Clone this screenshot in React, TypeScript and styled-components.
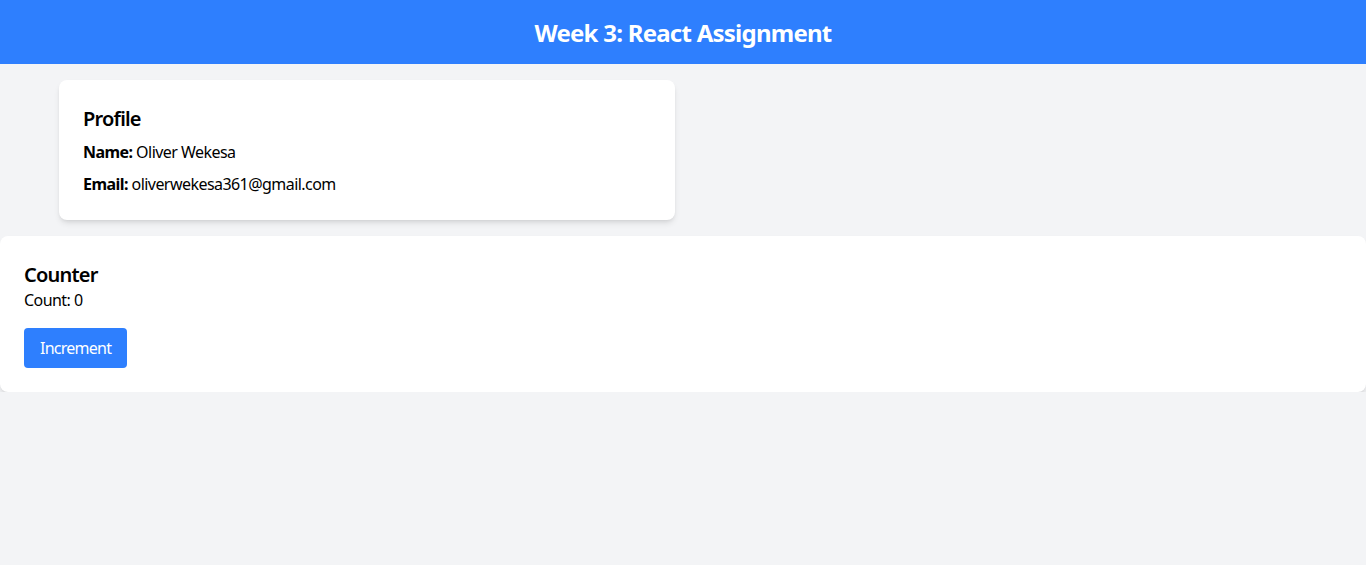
import React, { useState } from "react";
import styled, { createGlobalStyle } from "styled-components";

const GlobalStyle = createGlobalStyle`
  * { box-sizing: border-box; }
  html, body { margin: 0; padding: 0; }
  body {
    background: #f3f4f6;
    font-family: "Noto Sans", "Open Sans", sans-serif;
    color: #000;
    letter-spacing: -0.55px;
  }
`;

const Header = styled.header`
  height: 64px;
  background: #2e7ffe;
  display: flex;
  align-items: center;
  justify-content: center;
`;

const Title = styled.h1`
  margin: 0;
  padding-top: 2px;
  color: #fff;
  font-size: 24px;
  font-weight: 700;
  line-height: 32px;
  letter-spacing: -0.75px;
`;

const Main = styled.main`
  display: flex;
  flex-direction: column;
  gap: 16px;
  padding-top: 16px;
`;

const Card = styled.section<{ $wide?: boolean }>`
  background: #fff;
  border-radius: 8px;
  box-shadow: 0 4px 6px -1px rgba(0, 0, 0, 0.1), 0 2px 4px -2px rgba(0, 0, 0, 0.1);
  padding: 24px;
  width: ${(p) => (p.$wide ? "100%" : "616px")};
  margin-left: ${(p) => (p.$wide ? "0" : "59px")};
`;

const CardTitle = styled.h2`
  margin: 0;
  padding-top: 1px;
  height: 28px;
  font-size: 20px;
  line-height: 28px;
  font-weight: 600;
  letter-spacing: -0.8px;
`;

const Line = styled.p<{ $spaced?: boolean }>`
  margin: ${(p) => (p.$spaced ? "8px 0 0" : "0")};
  font-size: 16px;
  line-height: 24px;
  b { font-weight: 700; }
`;

const Button = styled.button`
  margin-top: 16px;
  background: #2e7ffe;
  color: #fff;
  border: none;
  border-radius: 4px;
  padding: 8px 16px;
  font-family: inherit;
  font-size: 16px;
  line-height: 24px;
  letter-spacing: -0.75px;
  cursor: pointer;
`;

export default function App() {
  const [count, setCount] = useState(0);
  return (
    <>
      <GlobalStyle />
      <Header>
        <Title>Week 3: React Assignment</Title>
      </Header>
      <Main>
        <Card>
          <CardTitle>Profile</CardTitle>
          <Line $spaced>
            <b>Name:</b> Oliver Wekesa
          </Line>
          <Line $spaced>
            <b>Email:</b> oliverwekesa361@gmail.com
          </Line>
        </Card>
        <Card $wide>
          <CardTitle>Counter</CardTitle>
          <Line>Count: {count}</Line>
          <Button onClick={() => setCount(count + 1)}>Increment</Button>
        </Card>
      </Main>
    </>
  );
}
